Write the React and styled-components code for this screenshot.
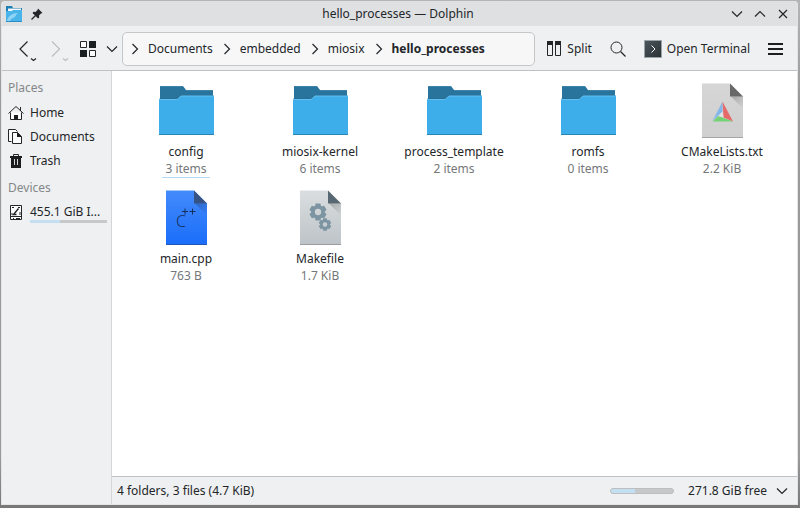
import { useState } from "react";
import styled, { createGlobalStyle, css } from "styled-components";

const folders = [
  { name: "config", info: "3 items", kind: "folder" },
  { name: "miosix-kernel", info: "6 items", kind: "folder" },
  { name: "process_template", info: "2 items", kind: "folder" },
  { name: "romfs", info: "0 items", kind: "folder" },
];

const files = [
  { name: "CMakeLists.txt", info: "2.2 KiB", kind: "cmake" },
  { name: "main.cpp", info: "763 B", kind: "cpp" },
  { name: "Makefile", info: "1.7 KiB", kind: "makefile" },
];

const crumbs = ["Documents", "embedded", "miosix", "hello_processes"];

const Chevron = ({ dir = "down" }) => {
  const points = {
    down: "3,5.5 8,10.5 13,5.5",
    up: "3,10.5 8,5.5 13,10.5",
    right: "5.5,3 10.5,8 5.5,13",
  };
  return (
    <Icon width="16" height="16" viewBox="0 0 16 16">
      <polyline points={points[dir]} fill="none" stroke="currentColor" strokeWidth="1.200" />
    </Icon>
  );
};

const HistoryIcon = ({ dir }) => (
  <Icon width="32" height="32" viewBox="0 0 32 32">
    <path
      d={dir === "left" ? "M19.500 8.500 12 16l7.500 7.500" : "M12 8.500 19.500 16l-7.500 7.500"}
      fill="none"
      stroke="currentColor"
      strokeWidth="1.200"
    />
    <path d="M23 25.500l2.500 2 2.500-2" fill="none" stroke="currentColor" strokeWidth="1.200" />
  </Icon>
);

const AppIcon = () => (
  <Icon width="18" height="18" viewBox="0 0 18 18">
    <path d="M1 1h6l1 2h9v6H1z" fill="#1f7fb4" />
    <path d="M3 3.500h13v5H3z" fill="#f4f8fa" />
    <path d="M1 6h6l1-1h9v11H1z" fill="#48b4ea" />
    <path d="M2 16c1-5 5-8 11-8-2 1-2 4-5 5-2 1-3 2-3 3z" fill="#8fd4f5" />
    <path d="M1 16h16v1H1z" fill="#2f8fc4" />
  </Icon>
);

const PinIcon = () => (
  <Icon width="12" height="12" viewBox="0 0 12 12">
    <path d="M7 0.500 11.500 5l-1.500.5-2 2 .2 2-1.200 1L1.500 5l1-1.200 2 .2 2-2z" fill="#232629" />
    <path d="M4.500 7.500.5 11.500" stroke="#232629" strokeWidth="1.200" />
  </Icon>
);

const CloseIcon = () => (
  <Icon width="16" height="16" viewBox="0 0 16 16">
    <path d="M4 4l8 8M12 4l-8 8" stroke="currentColor" strokeWidth="1.200" />
  </Icon>
);

const ViewIcon = () => (
  <Icon width="16" height="16" viewBox="0 0 16 16">
    <path d="M.5.5h6v6h-6zM9.500 9.500h6v6h-6z" fill="#fcfcfc" stroke="#232629" />
    <path d="M9 0h7v7H9zM0 9h7v7H0z" fill="#1b1e20" />
  </Icon>
);

const SplitIcon = () => (
  <Icon width="16" height="16" viewBox="0 0 16 16">
    <path d="M1.500.5h5v14h-5zM9.500.5h5v14h-5z" fill="none" stroke="#232629" />
    <path d="M1 0h6v4H1zM9 0h6v4H9z" fill="#232629" />
  </Icon>
);

const SearchIcon = () => (
  <Icon width="16" height="16" viewBox="0 0 16 16">
    <circle cx="6.500" cy="6.500" r="5.500" fill="none" stroke="#232629" />
    <path d="M10.500 10.500l5 5" stroke="#232629" strokeWidth="1.200" />
  </Icon>
);

const TerminalIcon = () => (
  <Icon width="18" height="18" viewBox="0 0 18 18">
    <defs>
      <linearGradient id="term" x1="0" y1="0" x2="1" y2="1">
        <stop offset="0" stopColor="#4b565c" />
        <stop offset="1" stopColor="#2a3134" />
      </linearGradient>
    </defs>
    <path d="M.5.5h17v17H.5z" fill="url(#term)" stroke="#9aa3a6" />
    <path d="M7.500 5.500 11 9l-3.500 3.500" fill="none" stroke="#fcfcfc" />
  </Icon>
);

const MenuIcon = () => (
  <Icon width="16" height="16" viewBox="0 0 16 16">
    <path d="M0 2h15v2H0zM0 7h15v2H0zM0 12h15v2H0z" fill="#1b1e20" />
  </Icon>
);

const HomeIcon = () => (
  <Icon width="16" height="16" viewBox="0 0 16 16">
    <path d="M2.500 7.500v7h11v-7" fill="#fcfcfc" stroke="#232629" />
    <path d="M.5 8.500 8 1.500l7.500 7M12.500 2v4" fill="none" stroke="#232629" />
    <path d="M6 10h4v5H6z" fill="#1b1e20" />
  </Icon>
);

const DocumentsIcon = () => (
  <Icon width="16" height="16" viewBox="0 0 16 16">
    <path d="M3.500 12.500h-3v-12h7l2 2" fill="#fcfcfc" stroke="#232629" />
    <path d="M4.500 3.500h5l4 4v7h-9z" fill="#fcfcfc" stroke="#232629" />
    <path d="M9 3l5 5H9z" fill="#1b1e20" />
  </Icon>
);

const TrashIcon = () => (
  <Icon width="16" height="16" viewBox="0 0 16 16">
    <path d="M5.500 3V1.500h5V3" fill="none" stroke="#232629" />
    <path d="M2 3h12v2h-1v10H3V5H2z" fill="#1b1e20" />
    <path d="M6.500 6v6M9.500 6v6" stroke="#d5d7d8" />
  </Icon>
);

const DiskIcon = () => (
  <Icon width="16" height="16" viewBox="0 0 16 16">
    <path d="M2.500.5h11v14h-11z" fill="#fcfcfc" stroke="#232629" />
    <path d="M4 2.500h2M10 2.500h2M4 8v2M12 7v3" stroke="#232629" />
    <path d="M10.500 3.500 5.500 9.500h3" fill="none" stroke="#232629" strokeWidth="1.400" />
    <path d="M3 11.500h10" stroke="#232629" />
    <path d="M5 13.500h1M8 13.500h4" stroke="#232629" />
  </Icon>
);

const FolderArt = () => (
  <Icon width="64" height="64" viewBox="0 0 64 64">
    <path d="M6 7h23l3 4h27v20H6z" fill="#28749c" />
    <path d="M6 7h23v1H6zM32 11h27v1H32z" fill="#3f83a8" />
    <path d="M5 19.500h17.500l4-3H60V56H5z" fill="#1f6288" opacity="0.500" />
    <path d="M5 20.500h18l4-3.500h33v39H5z" fill="#3daee9" />
    <path d="M5 20.500h18l4-3.500h33" fill="none" stroke="#64beee" />
    <path d="M5 55h55v1H5z" fill="#2a85b4" />
  </Icon>
);

const Gear = ({ x, y, r }) => (
  <g transform={`translate(${x} ${y})`} fill="#7d95a2">
    <circle r={r * 0.58} fill="none" stroke="#7d95a2" strokeWidth={r * 0.42} />
    {[0, 60, 120, 180, 240, 300].map((angle) => (
      <path
        key={angle}
        d={`M${-r * 0.28} ${-r}h${r * 0.56}l${r * 0.1} ${r * 0.4}h${-r * 0.76}z`}
        transform={`rotate(${angle})`}
      />
    ))}
  </g>
);

const pages = {
  cmake: { top: "#d6d6d6", bottom: "#cfcfcf", fold: "#686868", edge: "#a5a5a5" },
  cpp: { top: "#448bfb", bottom: "#1a6dfa", fold: "#365386", edge: "#2457b4" },
  makefile: { top: "#dadee0", bottom: "#bdc3c7", fold: "#586873", edge: "#989da1" },
};

const PageArt = ({ kind }) => {
  const { top, bottom, fold, edge } = pages[kind];
  return (
    <Icon width="64" height="64" viewBox="0 0 64 64">
      <defs>
        <linearGradient id={`page-${kind}`} x1="0" y1="0" x2="0" y2="1">
          <stop offset="0" stopColor={top} />
          <stop offset="1" stopColor={bottom} />
        </linearGradient>
        <linearGradient id={`shade-${kind}`} x1="0" y1="0" x2="1" y2="1">
          <stop offset="0" stopColor="#000" stopOpacity="0.220" />
          <stop offset="1" stopColor="#000" stopOpacity="0" />
        </linearGradient>
      </defs>
      <path d="M12 4.500h28l13 13V59H12z" fill={`url(#page-${kind})`} />
      <path d="M41 17.500h12v12z" fill={`url(#shade-${kind})`} />
      <path d="M40 4.500l13 13H40z" fill={fold} />
      <path d="M12 58h41v1H12z" fill={edge} />
      {kind === "cmake" && (
        <>
          <path d="M32.500 22.500 22.500 42l6-5.500 4-4z" fill="#84b7e9" />
          <path d="M32.500 22.500 43 42.500l-9.500-4z" fill="#e66a6a" />
          <path d="M22.500 42.500l6-5.500L43 42.500z" fill="#76d276" />
          <path d="M32.500 32.500l1 6-5-1.500z" fill="#dfe3e6" />
        </>
      )}
      {kind === "cpp" && (
        <>
          <Glyph x="22" y="41">
            C
          </Glyph>
          <path d="M28 25.500h6M31 22.500v6M35.500 25.500h6M38.500 22.500v6" stroke="#16305c" />
        </>
      )}
      {kind === "makefile" && (
        <>
          <Gear x={30} y={26} r={8.500} />
          <Gear x={37} y={38.500} r={6.200} />
        </>
      )}
    </Icon>
  );
};

const App = () => {
  const [selected, setSelected] = useState("");

  return (
    <Desktop>
      <GlobalStyle />
      <Window>
        <TitleBar>
          <TitleSide>
            <AppIcon />
            <PinIcon />
          </TitleSide>
          <Title>hello_processes — Dolphin</Title>
          <TitleSide $end>
            <WindowButton aria-label="Minimize">
              <Chevron />
            </WindowButton>
            <WindowButton aria-label="Maximize">
              <Chevron dir="up" />
            </WindowButton>
            <WindowButton aria-label="Close">
              <CloseIcon />
            </WindowButton>
          </TitleSide>
        </TitleBar>

        <ToolBar>
          <ToolButton aria-label="Back">
            <HistoryIcon dir="left" />
          </ToolButton>
          <ToolButton aria-label="Forward" disabled>
            <HistoryIcon dir="right" />
          </ToolButton>
          <ToolButton $padded aria-label="Icons view">
            <ViewIcon />
          </ToolButton>
          <ToolButton aria-label="View mode">
            <Chevron />
          </ToolButton>
          <Location aria-label="Location">
            {crumbs.map((crumb, i) => (
              <Crumb key={crumb} href="#" $current={i === crumbs.length - 1}>
                <Chevron dir="right" />
                {crumb}
              </Crumb>
            ))}
          </Location>
          <Actions>
            <ToolButton>
              <SplitIcon />
              Split
            </ToolButton>
            <ToolButton aria-label="Search">
              <SearchIcon />
            </ToolButton>
            <ToolButton>
              <TerminalIcon />
              Open Terminal
            </ToolButton>
            <ToolButton aria-label="Menu">
              <MenuIcon />
            </ToolButton>
          </Actions>
        </ToolBar>

        <Body>
          <SideBar>
            <SideHeading>Places</SideHeading>
            <Place href="#">
              <HomeIcon />
              Home
            </Place>
            <Place href="#">
              <DocumentsIcon />
              Documents
            </Place>
            <Place href="#">
              <TrashIcon />
              Trash
            </Place>
            <SideHeading>Devices</SideHeading>
            <Place href="#">
              <DiskIcon />
              <Device>
                455.1 GiB I...
                <Usage $small>
                  <UsageFill style={{ width: "39%" }} />
                </Usage>
              </Device>
            </Place>
          </SideBar>

          <Main>
            <Files>
              {[...folders, ...files].map((item, i) => (
                <Item
                  key={item.name}
                  $selected={selected === item.name}
                  onClick={() => setSelected(item.name)}
                >
                  {item.kind === "folder" ? <FolderArt /> : <PageArt kind={item.kind} />}
                  <span>{item.name}</span>
                  <ItemInfo $focused={i === 0}>{item.info}</ItemInfo>
                </Item>
              ))}
            </Files>
            <StatusBar>
              <StatusText>4 folders, 3 files (4.7 KiB)</StatusText>
              <Usage>
                <UsageFill style={{ width: "38%" }} />
              </Usage>
              <SpaceButton>
                271.8 GiB free
                <Chevron />
              </SpaceButton>
            </StatusBar>
          </Main>
        </Body>
      </Window>
    </Desktop>
  );
};

export default App;

const GlobalStyle = createGlobalStyle`
  * {
    box-sizing: border-box;
  }
  body {
    margin: 0;
    font: 12px/18px "Noto Sans", sans-serif;
    color: #232629;
  }
  button {
    font: inherit;
    color: inherit;
    background: none;
    border: none;
    padding: 0;
  }
  a {
    color: inherit;
    text-decoration: none;
  }
`;

const Icon = styled.svg`
  display: block;
  flex: none;
`;

const Glyph = styled.text`
  font: 300 16px "Noto Sans", sans-serif;
  fill: #16305c;
`;

const Desktop = styled.div`
  display: flex;
  min-height: 100vh;
  padding: 1px 2px 3px 1px;
  background: linear-gradient(#b4b4b4, #9a9a9a 20%, #9a9a9a 90%, #777);
`;

const Window = styled.div`
  flex: 1;
  min-width: 0;
  display: flex;
  flex-direction: column;
  border: 1px solid #e3e4e6;
  border-top: none;
  border-radius: 4px 4px 0 0;
  background: #eff0f1;
  overflow: hidden;
`;

const TitleBar = styled.header`
  display: grid;
  grid-template-columns: 1fr auto 1fr;
  align-items: center;
  height: 25px;
  padding: 0 6px 0 3px;
  background: #dee0e2;
`;

const TitleSide = styled.div`
  display: flex;
  align-items: center;
  gap: 8px;
  ${(props) =>
    props.$end &&
    css`
      justify-content: flex-end;
      gap: 7px;
    `}
`;

const Title = styled.h1`
  margin: 0;
  font-size: 12px;
  font-weight: 400;
`;

const WindowButton = styled.button`
  width: 16px;
  height: 16px;
`;

const ToolBar = styled.div`
  display: flex;
  align-items: center;
  height: 45px;
  padding: 2px 13px 0 6px;
  border-bottom: 1px solid #bfc1c3;
`;

const ToolButton = styled.button`
  display: flex;
  align-items: center;
  gap: 5px;
  white-space: nowrap;
  padding: ${(props) => (props.$padded ? "0 8px" : "0")};

  &:disabled {
    color: #bcbec0;
  }
`;

const Location = styled.nav`
  flex: 1;
  min-width: 0;
  display: flex;
  align-items: center;
  gap: 6px;
  height: 34px;
  margin: 0 11px 0 2px;
  padding: 0 4px;
  background: #f7f7f8;
  border: 1px solid #c4c6c8;
  border-radius: 5px;
`;

const Crumb = styled.a`
  display: flex;
  align-items: center;
  gap: 5px;
  white-space: nowrap;
  font-weight: ${(props) => (props.$current ? 700 : 400)};
`;

const Actions = styled.div`
  display: flex;
  align-items: center;
  gap: 18px;
`;

const Body = styled.div`
  flex: 1;
  display: flex;
`;

const SideBar = styled.aside`
  flex: none;
  width: 110px;
  padding: 2px 4px 0 6px;
  border-right: 1px solid #d3d5d7;
`;

const SideHeading = styled.h2`
  margin: 0;
  padding: 6px 0 4px;
  font-size: 12px;
  font-weight: 400;
  color: #84878a;
`;

const Place = styled.a`
  display: flex;
  align-items: center;
  gap: 6px;
  height: 24px;
`;

const Device = styled.span`
  flex: 1;
  line-height: 16px;
  white-space: nowrap;
`;

const Usage = styled.span`
  display: block;
  overflow: hidden;
  background: #c6c8ca;
  ${(props) =>
    props.$small
      ? css`
          height: 3px;
        `
      : css`
          width: 64px;
          height: 6px;
          border: 1px solid #bcbec0;
          border-radius: 3px;
        `}
`;

const UsageFill = styled.span`
  display: block;
  height: 100%;
  background: #c3dff1;
`;

const Main = styled.main`
  flex: 1;
  min-width: 0;
  display: flex;
  flex-direction: column;
`;

const Files = styled.div`
  flex: 1;
  display: grid;
  grid-template-columns: repeat(auto-fill, 134px);
  grid-auto-rows: 107px;
  align-content: start;
  padding: 4px 7px;
  background: #fff;
`;

const Item = styled.button`
  display: flex;
  flex-direction: column;
  align-items: center;
  justify-content: flex-start;
  padding-top: 4px;
  line-height: 17px;
  background: ${(props) => (props.$selected ? "#d6ecf8" : "none")};
`;

const ItemInfo = styled.span`
  padding: 0 3px;
  color: #75787a;
  border-bottom: 1px solid ${(props) => (props.$focused ? "#b5dcf3" : "transparent")};
`;

const StatusBar = styled.footer`
  display: flex;
  align-items: center;
  height: 28px;
  padding: 0 7px 0 5px;
  border-top: 1px solid #bfc1c3;
`;

const StatusText = styled.span`
  flex: 1;
`;

const SpaceButton = styled.button`
  display: flex;
  align-items: center;
  gap: 7px;
  margin-left: 14px;
`;
